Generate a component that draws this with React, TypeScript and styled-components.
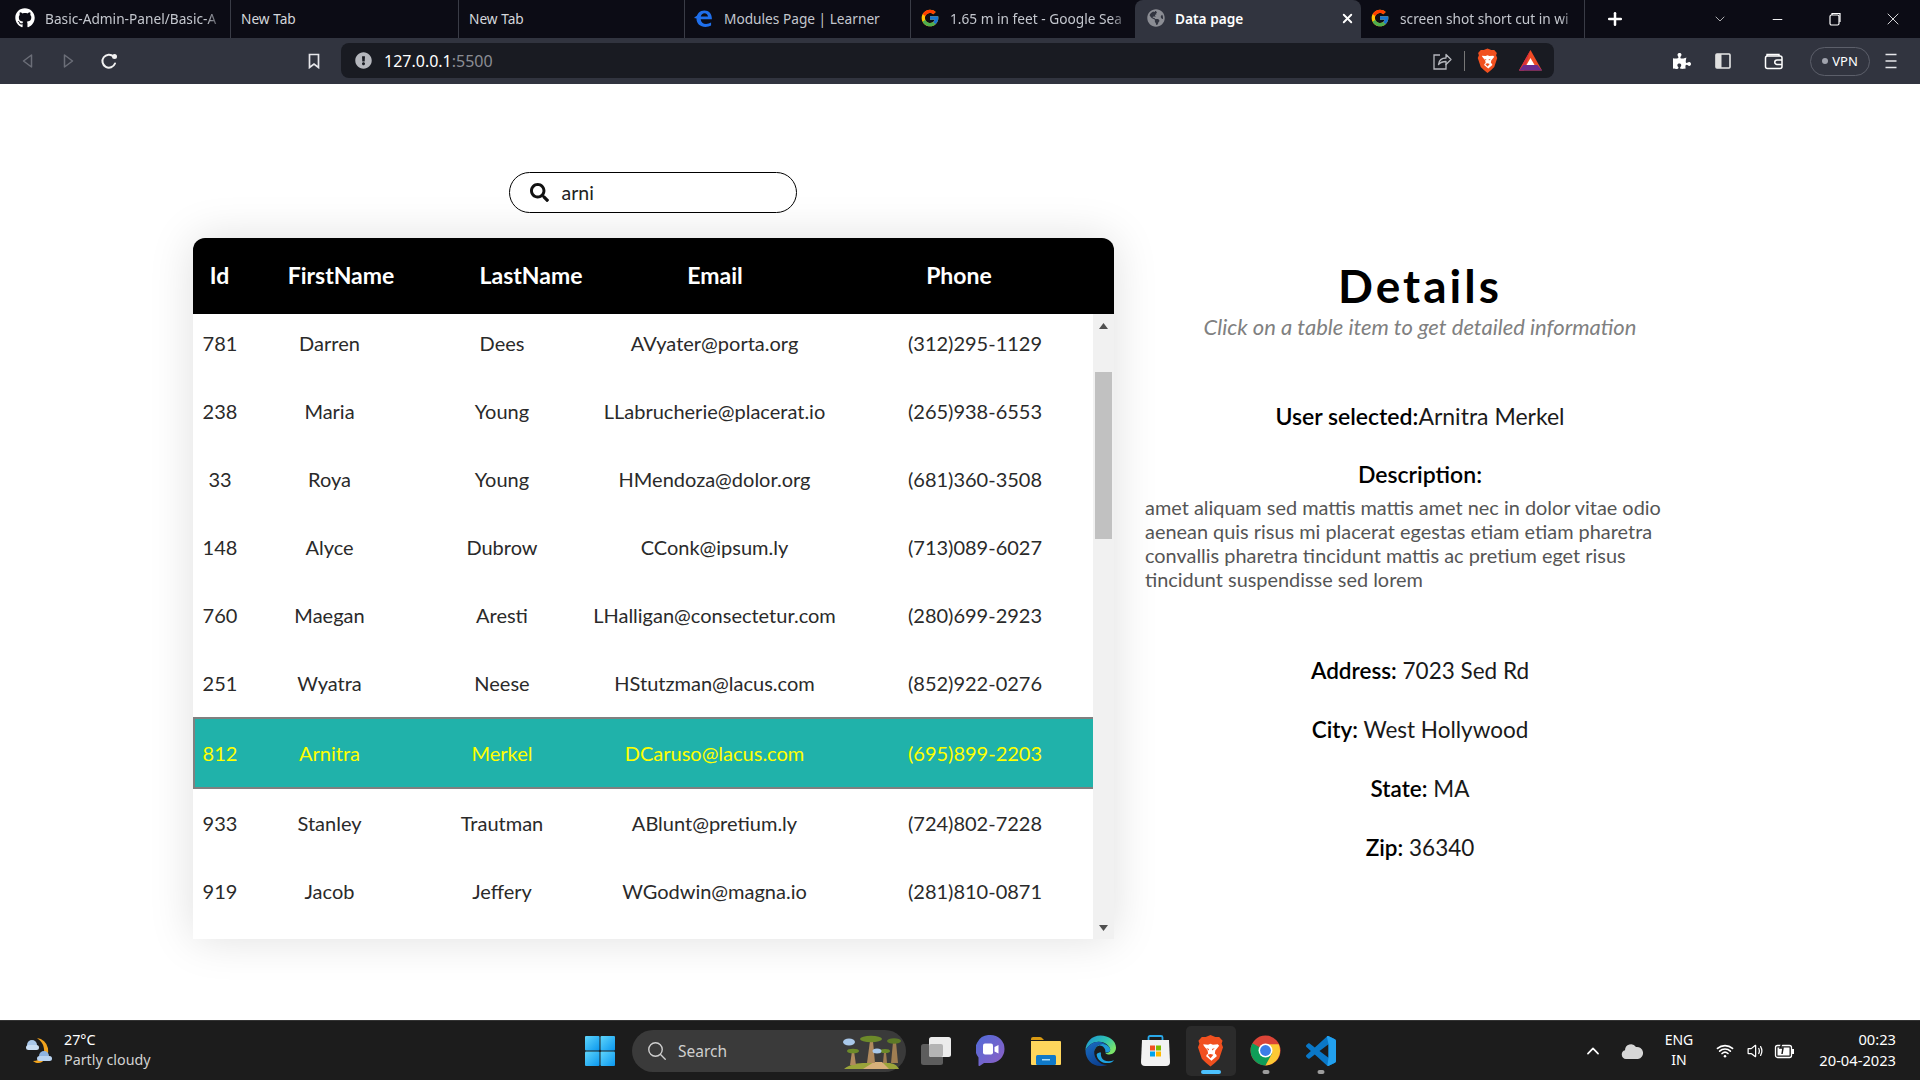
import React from "react";
import styled, { createGlobalStyle } from "styled-components";
import { FaGithub, FaSearch, FaPuzzlePiece, FaGlobeAmericas, FaExclamationCircle } from "react-icons/fa";
import { FcGoogle } from "react-icons/fc";
import { FiChevronDown, FiPlus, FiX, FiMinus } from "react-icons/fi";
import { IoSearchOutline, IoChevronUp, IoWifi, IoVolumeMediumOutline } from "react-icons/io5";

const GlobalStyle = createGlobalStyle`
  html, body {
    margin: 0;
    padding: 0;
    background: #fff;
    font-family: "Lato", "Liberation Sans", sans-serif;
  }
  * { box-sizing: border-box; }
`;

const Screen = styled.div`
  width: 1920px;
  height: 1080px;
  display: flex;
  flex-direction: column;
  overflow: hidden;
  background: #fff;
`;

/* browser chrome */
const TabStrip = styled.div`
  height: 38px;
  background: #0c0c15;
  display: flex;
  align-items: stretch;
  font-family: "Noto Sans", sans-serif;
`;

const Tab = styled.div<{ $w: number; $active?: boolean; $sep?: boolean; $pad?: number }>`
  width: ${(p) => p.$w}px;
  display: flex;
  align-items: center;
  gap: 10px;
  padding: 0 6px 2px ${(p) => p.$pad ?? 9}px;
  font-size: 13.7px;
  color: ${(p) => (p.$active ? "#fff" : "#c4c7ce")};
  font-weight: ${(p) => (p.$active ? 600 : 400)};
  background: ${(p) => (p.$active ? "#31343f" : "transparent")};
  border-radius: ${(p) => (p.$active ? "8px 8px 0 0" : "0")};
  border-right: ${(p) => (p.$sep ? "1px solid #3a3c46" : "none")};
`;

const TabTitle = styled.span`
  flex: 1;
  white-space: nowrap;
  overflow: hidden;
`;

const FadedTabTitle = styled(TabTitle)`
  -webkit-mask-image: linear-gradient(to right, #000 90%, transparent 100%);
  mask-image: linear-gradient(to right, #000 90%, transparent 100%);
`;

const PlainTabTitle = styled(TabTitle)`
  color: #d5d7dc;
  padding-left: 1px;
`;

const WindowControls = styled.div`
  flex: 1;
  display: flex;
  align-items: center;
  color: #fff;
  padding-left: 20px;
`;

const WindowButton = styled.span<{ $w: number; $offset?: number }>`
  width: ${(p) => p.$w}px;
  margin-left: ${(p) => p.$offset ?? 0}px;
  display: flex;
  justify-content: center;
  font-size: 17px;
`;

const ToolBar = styled.div`
  height: 46px;
  background: #31343f;
  display: flex;
  align-items: center;
  color: #e6e6ea;
`;

const NavGroup = styled.div`
  width: 341px;
  display: flex;
  align-items: center;
  padding-left: 20px;
  gap: 24px;
`;

const BookmarkSlot = styled.span`
  margin-left: 164px;
  display: flex;
`;

const AddressBar = styled.div`
  width: 1213px;
  height: 35px;
  margin-top: -1px;
  background: #191b22;
  border-radius: 8px;
  display: flex;
  align-items: center;
  padding-left: 14px;
  font-family: "Noto Sans", sans-serif;
  font-size: 16px;
  color: #fff;
`;

const Port = styled.span`
  color: #8b8d94;
`;

const AddressText = styled.span`
  flex: 1;
  margin-left: 12px;
`;

const AddressTools = styled.div`
  display: flex;
  align-items: center;
  gap: 12px;
  padding-right: 12px;
`;

const ToolDivider = styled.span`
  width: 1px;
  height: 20px;
  background: #777;
`;

const TriangleSlot = styled.span`
  margin-left: 9px;
  display: flex;
`;

const ExtTools = styled.div`
  flex: 1;
  display: flex;
  align-items: center;
  padding-left: 119px;
  gap: 23px;
`;

const WalletSlot = styled.span`
  margin-left: 9px;
  display: flex;
`;

const VpnPill = styled.div`
  width: 60px;
  height: 29px;
  margin-left: 3px;
  border: 1px solid #5c5f6a;
  border-radius: 15px;
  display: flex;
  align-items: center;
  justify-content: center;
  gap: 4px;
  font-family: "Noto Sans", sans-serif;
  font-size: 13px;
  color: #fff;
`;

const VpnDot = styled.span`
  width: 6px;
  height: 6px;
  border-radius: 50%;
  background: #a0a3ad;
`;

const MenuBtn = styled.span`
  margin-left: -8px;
  display: flex;
`;

/* page */
const Page = styled.main`
  flex: 1;
  display: flex;
  padding: 88px 0 0 193px;
`;

const TableColumn = styled.section`
  width: 921px;
  display: flex;
  flex-direction: column;
  align-items: center;
`;

const SearchBox = styled.div`
  width: 288px;
  height: 41px;
  margin-left: -2px;
  border: 1.5px solid #000;
  border-radius: 21px;
  background: #fff;
  display: flex;
  align-items: center;
  padding-left: 20px;
  gap: 13px;
  font-size: 19.5px;
  color: #222;
  position: relative;
  z-index: 1;
`;

const TableCard = styled.div`
  width: 921px;
  height: 701px;
  margin-top: 25px;
  border-radius: 12px 12px 0 0;
  box-shadow: 0 0 45px rgba(0, 0, 0, 0.13);
  background: #f1f1f1;
  display: flex;
  flex-direction: column;
  overflow: hidden;
`;

const HeaderRow = styled.div`
  height: 76px;
  flex: none;
  padding-bottom: 2px;
  background: #000;
  color: #fff;
  display: grid;
  grid-template-columns: 53px 190px 190px 178px 1fr;
  align-items: center;
  justify-items: center;
  font-size: 23px;
  font-weight: 700;
`;

const TableBody = styled.div`
  flex: 1;
  display: flex;
  min-height: 0;
`;

const Rows = styled.div`
  width: 900px;
  background: #fff;
  overflow: hidden;
`;

const RowsInner = styled.div`
  margin-top: -5px;
`;

const Row = styled.div<{ $selected?: boolean }>`
  height: ${(p) => (p.$selected ? 72 : 68)}px;
  display: grid;
  grid-template-columns: 54px 165px 180px 245px 256px;
  align-items: center;
  justify-items: center;
  font-size: 20px;
  color: ${(p) => (p.$selected ? "#ffff00" : "#2a2a2a")};
  background: ${(p) => (p.$selected ? "#20b2aa" : "#fff")};
  box-shadow: ${(p) =>
    p.$selected ? "inset 2px 2px 0 #808080, inset 0 -2px 0 #808080" : "none"};
`;

const PhoneCell = styled.span`
  padding-left: 20px;
`;

const ScrollTrack = styled.div`
  width: 21px;
  background: #f1f1f1;
  display: flex;
  flex-direction: column;
  align-items: center;
  padding-top: 9px;
  color: #505050;
`;

const ScrollThumb = styled.div`
  width: 17px;
  height: 167px;
  margin-top: 43px;
  background: #c1c1c1;
`;

const ScrollDown = styled.div`
  margin-top: auto;
  margin-bottom: 8px;
  display: flex;
`;

const DetailsColumn = styled.section`
  width: 550px;
  margin-left: 31px;
  padding-top: 86px;
  text-align: center;
  color: #1a1a1a;
`;

const Title = styled.h1`
  margin: 0;
  font-size: 46px;
  line-height: 56px;
  font-weight: 700;
  letter-spacing: 3px;
  color: #000;
`;

const Subtitle = styled.p`
  margin: -1px 0 0;
  font-size: 22px;
  line-height: 28px;
  font-style: italic;
  color: #808080;
`;

const UserLine = styled.p`
  margin: 61px 0 0;
  font-size: 23px;
  line-height: 28px;
`;

const DescriptionHead = styled.h3`
  margin: 30px 0 0;
  font-size: 23px;
  line-height: 28px;
  font-weight: 600;
  color: #000;
`;

const Description = styled.p`
  margin: 7px 0 0;
  width: 530px;
  font-size: 19.9px;
  line-height: 24px;
  text-align: left;
  color: #555;
`;

const InfoList = styled.div`
  margin-top: 66px;
  display: flex;
  flex-direction: column;
  gap: 31px;
`;

const InfoLine = styled.p`
  margin: 0;
  font-size: 22.5px;
  line-height: 28px;
`;

const Label = styled.span`
  font-weight: 600;
  color: #000;
`;

/* taskbar */
const TaskBar = styled.footer`
  height: 60px;
  background: #1c1c1c;
  border-top: 1px solid #333;
  display: flex;
  align-items: center;
  color: #fff;
  font-family: "Noto Sans", sans-serif;
`;

const Weather = styled.div`
  width: 585px;
  display: flex;
  align-items: center;
  padding-left: 24px;
  gap: 10px;
  font-size: 14.3px;
  line-height: 20px;
  margin-top: -2px;
`;

const WeatherSub = styled.div`
  color: #d2d2d2;
`;

const SearchPill = styled.div`
  width: 274px;
  height: 42px;
  margin-left: 17px;
  background: #3a3a3a;
  border-radius: 21px;
  display: flex;
  align-items: center;
  padding-left: 14px;
  gap: 10px;
  font-size: 15.5px;
  color: #cfcfcf;
`;

const PillArt = styled.span`
  margin-left: auto;
  margin-right: 3px;
  display: flex;
`;

const AppIcons = styled.div`
  display: flex;
  align-items: center;
  margin-left: 2px;
`;

const AppSlot = styled.div<{ $active?: boolean; $dot?: boolean }>`
  width: 55px;
  height: 50px;
  display: flex;
  align-items: center;
  justify-content: center;
  position: relative;
  &::before {
    content: "";
    position: absolute;
    inset: 0 2.5px;
    border-radius: 5px;
    background: ${(p) => (p.$active ? "#2b2b2b" : "transparent")};
  }
  &::after {
    content: "";
    position: absolute;
    bottom: 2px;
    left: 50%;
    transform: translateX(-50%);
    width: ${(p) => (p.$active ? 20 : p.$dot ? 7 : 0)}px;
    height: 4px;
    border-radius: 2px;
    background: ${(p) => (p.$active ? "#4cc2ff" : "#9d9d9d")};
  }
  & > * {
    position: relative;
  }
`;

const Tray = styled.div`
  flex: 1;
  display: flex;
  align-items: center;
  padding-left: 231px;
`;

const TrayIcon = styled.span<{ $w: number; $offset?: number }>`
  width: ${(p) => p.$w}px;
  margin-left: ${(p) => p.$offset ?? 0}px;
  display: flex;
  justify-content: center;
`;

const LangBlock = styled.div`
  width: 48px;
  text-align: center;
  font-size: 14px;
  line-height: 20px;
  margin: -2px 7px 0 1px;
`;

const Clock = styled.div`
  flex: 1;
  text-align: right;
  font-size: 14.7px;
  line-height: 21px;
  padding-right: 24px;
  margin-top: -2px;
`;

const EdgeTabIcon = () => (
  <svg width="20" height="20" viewBox="0 0 24 24">
    <path
      d="M3 13C3 7 7 3 12.500 3 18 3 21.500 7 21.500 13.500H8c.3 3.600 3 5.700 6.500 5.700 2.200 0 4.300-.6 6-1.700v3.600c-1.800 1-4.200 1.600-6.800 1.600C7.500 22.700 3 19 3 13zm5.100-2.800h8.700C16.600 7.800 15 6.300 12.600 6.300c-2.300 0-4 1.500-4.500 3.900z"
      fill="#1f6feb"
    />
    <path d="M0 12c2-2 4.500-3.500 8-4.500-2 1.500-3.500 3-4.500 5z" fill="#1f6feb" />
  </svg>
);

const EdgeIcon = () => (
  <svg width="31" height="31" viewBox="0 0 32 32">
    <defs>
      <linearGradient id="edgeTop" x1="0" y1="0" x2="1" y2="0.6">
        <stop offset="0" stopColor="#1b8fd8" />
        <stop offset="0.6" stopColor="#2fc3b0" />
        <stop offset="1" stopColor="#7be36a" />
      </linearGradient>
      <linearGradient id="edgeLow" x1="0" y1="0" x2="0.6" y2="1">
        <stop offset="0" stopColor="#1a6fc4" />
        <stop offset="1" stopColor="#0c3f8f" />
      </linearGradient>
    </defs>
    <path d="M16 .5C7 .5 .5 7.500 .5 16c3-6 8-9 13.500-9 6 0 11.500 3.500 12 8 .2 2.500-2 4-5 3.500 3 3 11 2 11-5.500C32 6 24.500 .5 16 .5z" fill="url(#edgeTop)" />
    <path d="M.5 16c3-6 8-9 13.500-9 5 0 8 3 8 3-6-2-12 1-12.500 7C9 24 15 31 23 31c-3 1-5 1-7 1C7 32 .5 25 .5 16z" fill="url(#edgeLow)" />
    <path d="M9.500 17c.5-6 6.500-9 12.500-7 2 1 4 3 4 5 .2 2.500-2 3.500-5 3 .8-5-4-8-7-7-2.500.8-3.500 3-4.500 6z" fill="#1d9ad6" />
    <path d="M12 20c.5 6 6 9 11 9 3 0 5.500-1 7-3-5 2-11.500 1.500-13-3-1-2.500-.5-5-.5-5-2 0-4 .5-4.500 2z" fill="#1fa3e0" />
  </svg>
);

const ChromeIcon = () => (
  <svg width="31" height="31" viewBox="0 0 32 32">
    <circle cx="16" cy="16" r="15.500" fill="#db4437" />
    <path d="M16 16L2.500 8.500A15.500 15.500 0 0 0 16 31.500l7.500-13z" fill="#0f9d58" />
    <path d="M16 9.500h13.600A15.500 15.500 0 0 1 16 31.500l7-13z" fill="#fcc934" />
    <circle cx="16" cy="16" r="7.200" fill="#fff" />
    <circle cx="16" cy="16" r="5.600" fill="#3b7de8" />
  </svg>
);

const VsCodeIcon = () => (
  <svg width="30" height="30" viewBox="0 0 100 100">
    <path
      d="M71 99.300c1.600.6 3.400.6 5-.2l20.600-9.900c2.200-1 3.400-3.200 3.400-5.600V16.400c0-2.400-1.300-4.600-3.400-5.600L76 .9c-2.100-1-4.600-.8-6.400.5-.3.2-.5.4-.8.7L29.400 38 12.200 25c-1.600-1.200-3.800-1.100-5.300.2l-5.500 5c-1.800 1.600-1.800 4.500 0 6.100L16.300 50 1.400 63.700c-1.800 1.700-1.800 4.500 0 6.100l5.500 5c1.500 1.300 3.700 1.400 5.300.2l17.200-13 39.400 35.900c.6.600 1.400 1.100 2.200 1.400zM75 27.300L45.100 50 75 72.700z"
      fill="#0a78c8"
      fillRule="evenodd"
    />
    <path d="M71 99.300c1.600.6 3.400.6 5-.2l20.600-9.900c2.200-1 3.400-3.200 3.400-5.600V16.400c0-2.400-1.300-4.600-3.400-5.600L76 .9c-2.100-1-4.600-.8-6.400.5L75 27.300v45.400z" fill="#22a0ee" />
  </svg>
);

const WindowsLogo = () => (
  <svg width="30" height="30" viewBox="0 0 30 30">
    <defs>
      <linearGradient id="winBlue" x1="0" y1="0" x2="1" y2="1">
        <stop offset="0" stopColor="#5fd5fb" />
        <stop offset="1" stopColor="#0a97ef" />
      </linearGradient>
    </defs>
    <rect x="0" y="0" width="14.500" height="14.500" rx="1" fill="url(#winBlue)" />
    <rect x="15.500" y="0" width="14.500" height="14.500" rx="1" fill="url(#winBlue)" />
    <rect x="0" y="15.500" width="14.500" height="14.500" rx="1" fill="url(#winBlue)" />
    <rect x="15.500" y="15.500" width="14.500" height="14.500" rx="1" fill="url(#winBlue)" />
  </svg>
);

const WeatherIcon = () => (
  <svg width="30" height="32" viewBox="0 0 30 32">
    <path d="M13 4a13 13 0 0 1 5 24c-3 2-7 1-9-1 8 0 12-5 11-12-.5-5-3-8-7-11z" fill="#f2a31c" />
    <circle cx="8" cy="11" r="5" fill="#a9c8ea" />
    <rect x="2" y="11" width="13" height="5" rx="2.500" fill="#c9def4" />
    <circle cx="20" cy="22" r="5" fill="#8fb4e0" />
    <rect x="13" y="22" width="15" height="5" rx="2.500" fill="#b9d3f0" />
  </svg>
);

const BraveIcon = ({ w, h }: { w: number; h: number }) => (
  <svg width={w} height={h} viewBox="0 0 28 33">
    <path d="M5 2.500L9 2.500 14 .5l5 2 4 0 3.500 4-1 3 1.500 3.500-4 12-4.500 4.500-4.500 3.500-4.500-3.500L5 25 1 13l1.500-3.500-1-3z" fill="#f1501f" />
    <path d="M6.500 10l5 .5 2.500-1 2.500 1 5-.5 1.500 1.500-4 5-.5 3 1.500 1.500.5 1.500-5.500 4.500-5.500-4.500.5-1.500 1.500-1.500-.5-3-4-5z" fill="#fff" />
    <path d="M11 21l3-1 3 1-3 3.500z" fill="#f1501f" />
    <path d="M9.500 14l3 1-.5 1.500zM18.500 14l-3 1 .5 1.500z" fill="#f1501f" />
  </svg>
);

const TriangleIcon = () => (
  <svg width="23" height="21" viewBox="0 0 23 21">
    <path d="M11.500 0L23 20.500H0z" fill="#ef4a24" />
    <path d="M11.500 0L0 20.500h5z" fill="#d92f3a" />
    <path d="M11.500 8l4 7h-8z" fill="#fff" />
    <path d="M0 20.500L4.500 15h14l4.500 5.500z" fill="#6a2c8e" />
  </svg>
);

const ChatIcon = () => (
  <svg width="29" height="31" viewBox="0 0 29 31">
    <defs>
      <linearGradient id="chatGrad" x1="0" y1="0" x2="1" y2="1">
        <stop offset="0" stopColor="#4f6bd8" />
        <stop offset="1" stopColor="#8f5fc4" />
      </linearGradient>
    </defs>
    <path d="M14.500 0a14 14 0 0 1 0 28H8l-4 2.800c-.8.5-1.500 0-1.500-1V22.500A14 14 0 0 1 14.500 0z" fill="url(#chatGrad)" />
    <rect x="7" y="8.500" width="10" height="11" rx="2" fill="#fff" />
    <path d="M18.500 12l4-2v8.500l-4-2z" fill="#fff" />
  </svg>
);

const FolderIcon = () => (
  <svg width="30" height="28" viewBox="0 0 30 28">
    <path d="M0 2a2 2 0 0 1 2-2h7c1 0 2 .7 3 2l1 1H0z" fill="#d99a13" />
    <path d="M0 4h29a1 1 0 0 1 1 1v22a1 1 0 0 1-1 1H1a1 1 0 0 1-1-1z" fill="#ffd65c" />
    <rect x="5" y="18" width="20" height="10" rx="1.500" fill="#0f79c9" />
    <rect x="11" y="22" width="8" height="1.500" fill="#a8dcf9" />
  </svg>
);

const StoreIcon = () => (
  <svg width="29" height="31" viewBox="0 0 29 31">
    <path d="M7.500 6V2.500a1.500 1.500 0 0 1 1.500-1.500h11a1.500 1.500 0 0 1 1.500 1.500V6" fill="none" stroke="#29a8e8" strokeWidth="1.800" />
    <path d="M1 5h27l1 22a4 4 0 0 1-4 4H4a4 4 0 0 1-4-4z" fill="#f2f2f2" />
    <rect x="9" y="10.500" width="5" height="5" fill="#f25022" />
    <rect x="15" y="10.500" width="5" height="5" fill="#7fba00" />
    <rect x="9" y="16.500" width="5" height="5" fill="#00a4ef" />
    <rect x="15" y="16.500" width="5" height="5" fill="#ffb900" />
  </svg>
);

const TaskViewIcon = () => (
  <svg width="30" height="28" viewBox="0 0 30 28">
    <rect x="0" y="7" width="22" height="21" rx="2.500" fill="#5d5d5d" />
    <rect x="8" y="0" width="22" height="20" rx="2.500" fill="#ececec" />
    <rect x="8" y="7" width="14" height="13" rx="2" fill="#b4b4b4" />
  </svg>
);

const PillArtwork = () => (
  <svg width="62" height="36" viewBox="0 0 62 36">
    <path d="M3 36c6-5 14-6 22-6h22c5 0 9 2 11 6z" fill="#9aa43a" />
    <path d="M22 36l11-7h8l7 7z" fill="#d8b07a" />
    <path d="M26 30l3-22h3l2 22z" fill="#b08a5e" />
    <path d="M50 30l2-21h3l2 21z" fill="#a07e52" />
    <path d="M9 32l2-14h2l2 14z" fill="#b08a5e" />
    <path d="M42 30l1-11h2l1 11z" fill="#a07e52" />
    <ellipse cx="30" cy="6" rx="11" ry="3.200" fill="#6d8a2a" />
    <ellipse cx="53" cy="8" rx="7" ry="2.800" fill="#5d7a26" />
    <ellipse cx="12" cy="18" rx="6" ry="2.300" fill="#6d8a2a" />
    <ellipse cx="44" cy="18" rx="5" ry="2" fill="#6d8a2a" />
    <ellipse cx="8" cy="9" rx="6" ry="3.500" fill="#a9c8ea" />
    <ellipse cx="36" cy="18" rx="4.500" ry="2.500" fill="#a9c8ea" />
  </svg>
);

const CloudIcon = () => (
  <svg width="22" height="18" viewBox="0 0 22 18">
    <path d="M5 17a4.500 4.500 0 0 1-1-8.800A6 6 0 0 1 15 5a5 5 0 0 1 2 12z" fill="#d6d6d6" />
  </svg>
);

const BatteryIcon = () => (
  <svg width="22" height="20" viewBox="0 0 22 20">
    <rect x="1.500" y="4.500" width="16" height="12" rx="2" fill="none" stroke="#fff" strokeWidth="1.300" />
    <rect x="3.500" y="6.500" width="12" height="8" fill="#fff" />
    <rect x="18" y="8" width="2" height="5" fill="#fff" />
    <path d="M9 0l-3 7h3l-1 6" stroke="#1c1c1c" strokeWidth="1.500" fill="none" />
  </svg>
);

const BackArrow = ({ flip }: { flip?: boolean }) => (
  <svg width="16" height="16" viewBox="0 0 16 16" style={flip ? { transform: "scaleX(-1)" } : undefined}>
    <path d="M11.500 2v12L3.500 8z" fill="none" stroke="#6b6e78" strokeWidth="1.500" strokeLinejoin="round" />
  </svg>
);

const ReloadIcon = () => (
  <svg width="18" height="18" viewBox="0 0 18 18">
    <path d="M15 11.500A6.500 6.500 0 1 1 13.500 4.500" fill="none" stroke="#f2f2f2" strokeWidth="2" strokeLinecap="round" />
    <circle cx="14.500" cy="4.500" r="2.500" fill="#f2f2f2" />
  </svg>
);

const BookmarkIcon = () => (
  <svg width="16" height="16" viewBox="0 0 16 16">
    <path d="M3.500 1.500h9v13L8 11l-4.500 3.500z" fill="none" stroke="#e6e6ea" strokeWidth="1.700" />
  </svg>
);

const ShareIcon = () => (
  <svg width="20" height="20" viewBox="0 0 20 20">
    <path d="M8 4H2v14h12v-5" fill="none" stroke="#b5b7bd" strokeWidth="1.300" />
    <path d="M6.500 13.500c.5-4 3.500-6.500 7.500-6.500V3.500l5 5-5 5V10.500c-3 0-5.500.8-7.500 3z" fill="none" stroke="#b5b7bd" strokeWidth="1.300" strokeLinejoin="round" />
  </svg>
);

const SidebarIcon = () => (
  <svg width="18" height="18" viewBox="0 0 18 18">
    <rect x="2" y="2" width="14" height="14" rx="1" fill="none" stroke="#e8e8e8" strokeWidth="1.600" />
    <rect x="2" y="2" width="5.500" height="14" fill="#e0e0e0" />
  </svg>
);

const WalletIcon = () => (
  <svg width="20" height="18" viewBox="0 0 20 18">
    <path d="M3 4V2.500h12V4" fill="none" stroke="#fff" strokeWidth="1.400" />
    <rect x="1.500" y="4" width="16.500" height="12.500" rx="2" fill="none" stroke="#fff" strokeWidth="1.500" />
    <path d="M18 8h-5a2 2 0 0 0 0 4.500h5" fill="none" stroke="#fff" strokeWidth="1.500" />
  </svg>
);

const MenuIcon = () => (
  <svg width="12" height="16" viewBox="0 0 12 16">
    <path d="M.5 1.500h11M.5 8h11M.5 14.500h11" stroke="#e6e6ea" strokeWidth="1.600" />
  </svg>
);

const ArrowUp = () => (
  <svg width="9" height="6" viewBox="0 0 9 6">
    <path d="M4.500 0L9 6H0z" fill="currentColor" />
  </svg>
);

const ArrowDown = () => (
  <svg width="9" height="6" viewBox="0 0 9 6">
    <path d="M4.500 6L9 0H0z" fill="currentColor" />
  </svg>
);

const rows = [
  { id: 781, first: "Darren", last: "Dees", email: "AVyater@porta.org", phone: "(312)295-1129" },
  { id: 238, first: "Maria", last: "Young", email: "LLabrucherie@placerat.io", phone: "(265)938-6553" },
  { id: 33, first: "Roya", last: "Young", email: "HMendoza@dolor.org", phone: "(681)360-3508" },
  { id: 148, first: "Alyce", last: "Dubrow", email: "CConk@ipsum.ly", phone: "(713)089-6027" },
  { id: 760, first: "Maegan", last: "Aresti", email: "LHalligan@consectetur.com", phone: "(280)699-2923" },
  { id: 251, first: "Wyatra", last: "Neese", email: "HStutzman@lacus.com", phone: "(852)922-0276" },
  { id: 812, first: "Arnitra", last: "Merkel", email: "DCaruso@lacus.com", phone: "(695)899-2203", selected: true },
  { id: 933, first: "Stanley", last: "Trautman", email: "ABlunt@pretium.ly", phone: "(724)802-7228" },
  { id: 919, first: "Jacob", last: "Jeffery", email: "WGodwin@magna.io", phone: "(281)810-0871" },
];

export default function App() {
  return (
    <Screen>
      <GlobalStyle />
      <TabStrip>
        <Tab $w={231} $sep $pad={15}>
          <FaGithub size={20} color="#fff" />
          <FadedTabTitle>Basic-Admin-Panel/Basic-A</FadedTabTitle>
        </Tab>
        <Tab $w={228} $sep>
          <PlainTabTitle>New Tab</PlainTabTitle>
        </Tab>
        <Tab $w={226} $sep>
          <PlainTabTitle>New Tab</PlainTabTitle>
        </Tab>
        <Tab $w={226} $sep>
          <EdgeTabIcon />
          <TabTitle>Modules Page | Learner</TabTitle>
        </Tab>
        <Tab $w={224}>
          <FcGoogle size={20} />
          <FadedTabTitle>1.65 m in feet - Google Sea</FadedTabTitle>
        </Tab>
        <Tab $w={226} $active $pad={12}>
          <FaGlobeAmericas size={18} color="#8b8d94" />
          <TabTitle>Data page</TabTitle>
          <FiX size={15} color="#fff" strokeWidth={3} />
        </Tab>
        <Tab $w={224} $sep>
          <FcGoogle size={20} />
          <FadedTabTitle>screen shot short cut in wi</FadedTabTitle>
        </Tab>
        <WindowControls>
          <FiPlus size={20} strokeWidth={3} />
          <WindowButton $w={72} $offset={59}>
            <FiChevronDown size={16} strokeWidth={1} />
          </WindowButton>
          <WindowButton $w={42}>
            <FiMinus size={15} strokeWidth={1.500} />
          </WindowButton>
          <WindowButton $w={74}>
            <svg width="14" height="14" viewBox="0 0 14 14">
              <rect x="2" y="3" width="9" height="10" rx="1.500" fill="none" stroke="#fff" strokeWidth="1.200" />
              <path d="M4 3V1.500h8V10" fill="none" stroke="#fff" strokeWidth="1.200" />
            </svg>
          </WindowButton>
          <WindowButton $w={42}>
            <FiX size={20} strokeWidth={1} />
          </WindowButton>
        </WindowControls>
      </TabStrip>

      <ToolBar>
        <NavGroup>
          <BackArrow />
          <BackArrow flip />
          <ReloadIcon />
          <BookmarkSlot>
            <BookmarkIcon />
          </BookmarkSlot>
        </NavGroup>
        <AddressBar>
          <FaExclamationCircle size={17} color="#b5b7bd" />
          <AddressText>
            127.0.0.1<Port>:5500</Port>
          </AddressText>
          <AddressTools>
            <ShareIcon />
            <ToolDivider />
            <BraveIcon w={21} h={25} />
            <TriangleSlot>
              <TriangleIcon />
            </TriangleSlot>
          </AddressTools>
        </AddressBar>
        <ExtTools>
          <FaPuzzlePiece size={18} color="#fff" />
          <SidebarIcon />
          <WalletSlot>
            <WalletIcon />
          </WalletSlot>
          <VpnPill>
            <VpnDot />
            VPN
          </VpnPill>
          <MenuBtn>
            <MenuIcon />
          </MenuBtn>
        </ExtTools>
      </ToolBar>

      <Page>
        <TableColumn>
          <SearchBox>
            <FaSearch size={19} color="#111" />
            arni
          </SearchBox>
          <TableCard>
            <HeaderRow>
              <span>Id</span>
              <span>FirstName</span>
              <span>LastName</span>
              <span>Email</span>
              <span>Phone</span>
            </HeaderRow>
            <TableBody>
              <Rows>
                <RowsInner>
                  {rows.map((r) => (
                    <Row key={r.id} $selected={r.selected}>
                      <span>{r.id}</span>
                      <span>{r.first}</span>
                      <span>{r.last}</span>
                      <span>{r.email}</span>
                      <PhoneCell>{r.phone}</PhoneCell>
                    </Row>
                  ))}
                </RowsInner>
              </Rows>
              <ScrollTrack>
                <ArrowUp />
                <ScrollThumb />
                <ScrollDown>
                  <ArrowDown />
                </ScrollDown>
              </ScrollTrack>
            </TableBody>
          </TableCard>
        </TableColumn>

        <DetailsColumn>
          <Title>Details</Title>
          <Subtitle>Click on a table item to get detailed information</Subtitle>
          <UserLine>
            <Label>User selected:</Label>Arnitra Merkel
          </UserLine>
          <DescriptionHead>Description:</DescriptionHead>
          <Description>
            amet aliquam sed mattis mattis amet nec in dolor vitae odio aenean quis risus mi placerat egestas etiam
            etiam pharetra convallis pharetra tincidunt mattis ac pretium eget risus tincidunt suspendisse sed lorem
          </Description>
          <InfoList>
            <InfoLine>
              <Label>Address:</Label> 7023 Sed Rd
            </InfoLine>
            <InfoLine>
              <Label>City:</Label> West Hollywood
            </InfoLine>
            <InfoLine>
              <Label>State:</Label> MA
            </InfoLine>
            <InfoLine>
              <Label>Zip:</Label> 36340
            </InfoLine>
          </InfoList>
        </DetailsColumn>
      </Page>

      <TaskBar>
        <Weather>
          <WeatherIcon />
          <div>
            <div>27°C</div>
            <WeatherSub>Partly cloudy</WeatherSub>
          </div>
        </Weather>
        <WindowsLogo />
        <SearchPill>
          <IoSearchOutline size={22} />
          Search
          <PillArt>
            <PillArtwork />
          </PillArt>
        </SearchPill>
        <AppIcons>
          <AppSlot>
            <TaskViewIcon />
          </AppSlot>
          <AppSlot>
            <ChatIcon />
          </AppSlot>
          <AppSlot>
            <FolderIcon />
          </AppSlot>
          <AppSlot>
            <EdgeIcon />
          </AppSlot>
          <AppSlot>
            <StoreIcon />
          </AppSlot>
          <AppSlot $active>
            <BraveIcon w={27} h={33} />
          </AppSlot>
          <AppSlot $dot>
            <ChromeIcon />
          </AppSlot>
          <AppSlot $dot>
            <VsCodeIcon />
          </AppSlot>
        </AppIcons>
        <Tray>
          <TrayIcon $w={28}>
            <IoChevronUp size={18} />
          </TrayIcon>
          <TrayIcon $w={44} $offset={3}>
            <CloudIcon />
          </TrayIcon>
          <LangBlock>
            ENG
            <br />
            IN
          </LangBlock>
          <TrayIcon $w={30}>
            <IoWifi size={20} />
          </TrayIcon>
          <TrayIcon $w={30}>
            <IoVolumeMediumOutline size={20} />
          </TrayIcon>
          <TrayIcon $w={30}>
            <BatteryIcon />
          </TrayIcon>
          <Clock>
            00:23
            <br />
            20-04-2023
          </Clock>
        </Tray>
      </TaskBar>
    </Screen>
  );
}
